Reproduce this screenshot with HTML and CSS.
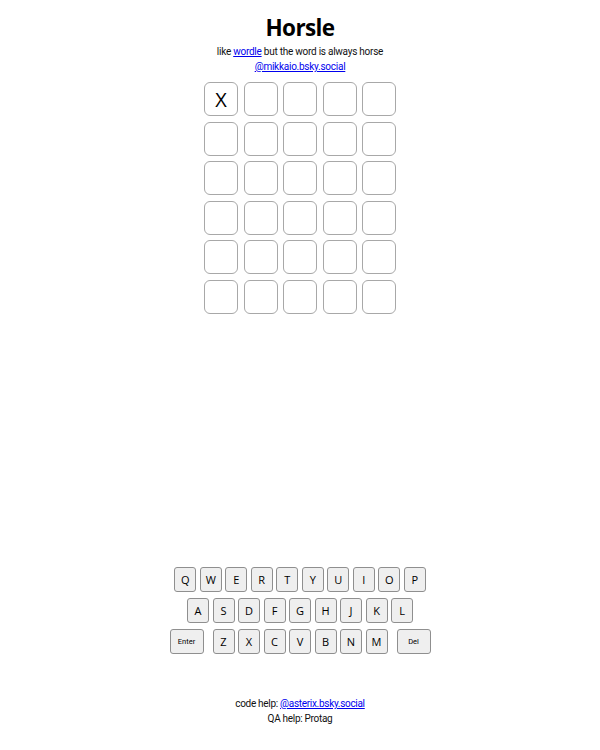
FILE: index.html
```html
<!DOCTYPE html>
<html lang="en">
<head>
<meta charset="utf-8">
<title>Horsle</title>
<link rel="stylesheet" href="styles.css">
</head>
<body>
<div class="app">
  <header class="header">
    <h1 class="title">Horsle</h1>
    <p class="subtitle">like <a href="#">wordle</a> but the word is always horse</p>
    <p class="subtitle"><a href="#">@mikkaio.bsky.social</a></p>
  </header>

  <div class="board">
    <div class="row"><div class="tile">X</div><div class="tile"></div><div class="tile"></div><div class="tile"></div><div class="tile"></div></div>
    <div class="row"><div class="tile"></div><div class="tile"></div><div class="tile"></div><div class="tile"></div><div class="tile"></div></div>
    <div class="row"><div class="tile"></div><div class="tile"></div><div class="tile"></div><div class="tile"></div><div class="tile"></div></div>
    <div class="row"><div class="tile"></div><div class="tile"></div><div class="tile"></div><div class="tile"></div><div class="tile"></div></div>
    <div class="row"><div class="tile"></div><div class="tile"></div><div class="tile"></div><div class="tile"></div><div class="tile"></div></div>
    <div class="row"><div class="tile"></div><div class="tile"></div><div class="tile"></div><div class="tile"></div><div class="tile"></div></div>
  </div>

  <div class="spacer"></div>

  <div class="keyboard">
    <div class="krow">
      <button class="key">Q</button><button class="key">W</button><button class="key">E</button><button class="key">R</button><button class="key">T</button><button class="key">Y</button><button class="key">U</button><button class="key">I</button><button class="key">O</button><button class="key">P</button>
    </div>
    <div class="krow">
      <button class="key">A</button><button class="key">S</button><button class="key">D</button><button class="key">F</button><button class="key">G</button><button class="key">H</button><button class="key">J</button><button class="key">K</button><button class="key">L</button>
    </div>
    <div class="krow">
      <button class="key key-wide key-enter">Enter</button><button class="key">Z</button><button class="key">X</button><button class="key">C</button><button class="key">V</button><button class="key">B</button><button class="key">N</button><button class="key">M</button><button class="key key-wide key-del">Del</button>
    </div>
  </div>

  <footer class="footer">
    <p class="credit">code help: <a href="#">@asterix.bsky.social</a></p>
    <p class="credit">QA help: Protag</p>
  </footer>
</div>
</body>
</html>
```

FILE: styles.css
```css
html, body {
  margin: 0;
  padding: 0;
  background: #ffffff;
}

body {
  font-family: "Open Sans", "Noto Sans", "Liberation Sans", sans-serif;
  color: #111;
}

.app {
  height: 750px;
  box-sizing: border-box;
  padding: 13px 0 24px;
  display: flex;
  flex-direction: column;
  align-items: center;
}

.header {
  text-align: center;
}

.title {
  margin: 0 0 2px;
  font-size: 22.5px;
  line-height: 29px;
  font-weight: 700;
  letter-spacing: -0.6px;
  color: #000;
}

.subtitle {
  margin: 0;
  font-family: Roboto, "Open Sans", sans-serif;
  font-size: 10px;
  line-height: 15px;
  letter-spacing: -0.25px;
}

a {
  color: #0000ee;
  text-decoration: underline;
}

.board {
  margin-top: 8px;
  display: flex;
  flex-direction: column;
  gap: 5.5px;
}

.row {
  display: flex;
  gap: 5.5px;
}

.tile {
  width: 34px;
  height: 34px;
  box-sizing: border-box;
  border: 1px solid #a8a8a8;
  border-radius: 6px;
  display: flex;
  align-items: center;
  justify-content: center;
  font-size: 20px;
  color: #000;
}

.spacer {
  flex: 1;
}

.keyboard {
  display: flex;
  flex-direction: column;
  align-items: center;
  gap: 6px;
}

.krow {
  display: flex;
  gap: 3.5px;
}

.key {
  width: 22px;
  height: 25px;
  box-sizing: border-box;
  margin: 0;
  padding: 0;
  border: 1px solid #8f8f8f;
  border-radius: 3px;
  background: #efefef;
  font-family: "Open Sans", "Noto Sans", "Liberation Sans", sans-serif;
  font-size: 11px;
  color: #000;
}

.key-wide {
  width: 34px;
  font-family: Roboto, "Open Sans", sans-serif;
  font-size: 7.5px;
}

.key-enter {
  margin-right: 5.5px;
}

.key-del {
  margin-left: 5.5px;
}

.footer {
  margin-top: 42px;
  text-align: center;
}

.credit {
  margin: 0;
  font-family: Roboto, "Open Sans", sans-serif;
  font-size: 10px;
  line-height: 15px;
  letter-spacing: -0.3px;
}
```
